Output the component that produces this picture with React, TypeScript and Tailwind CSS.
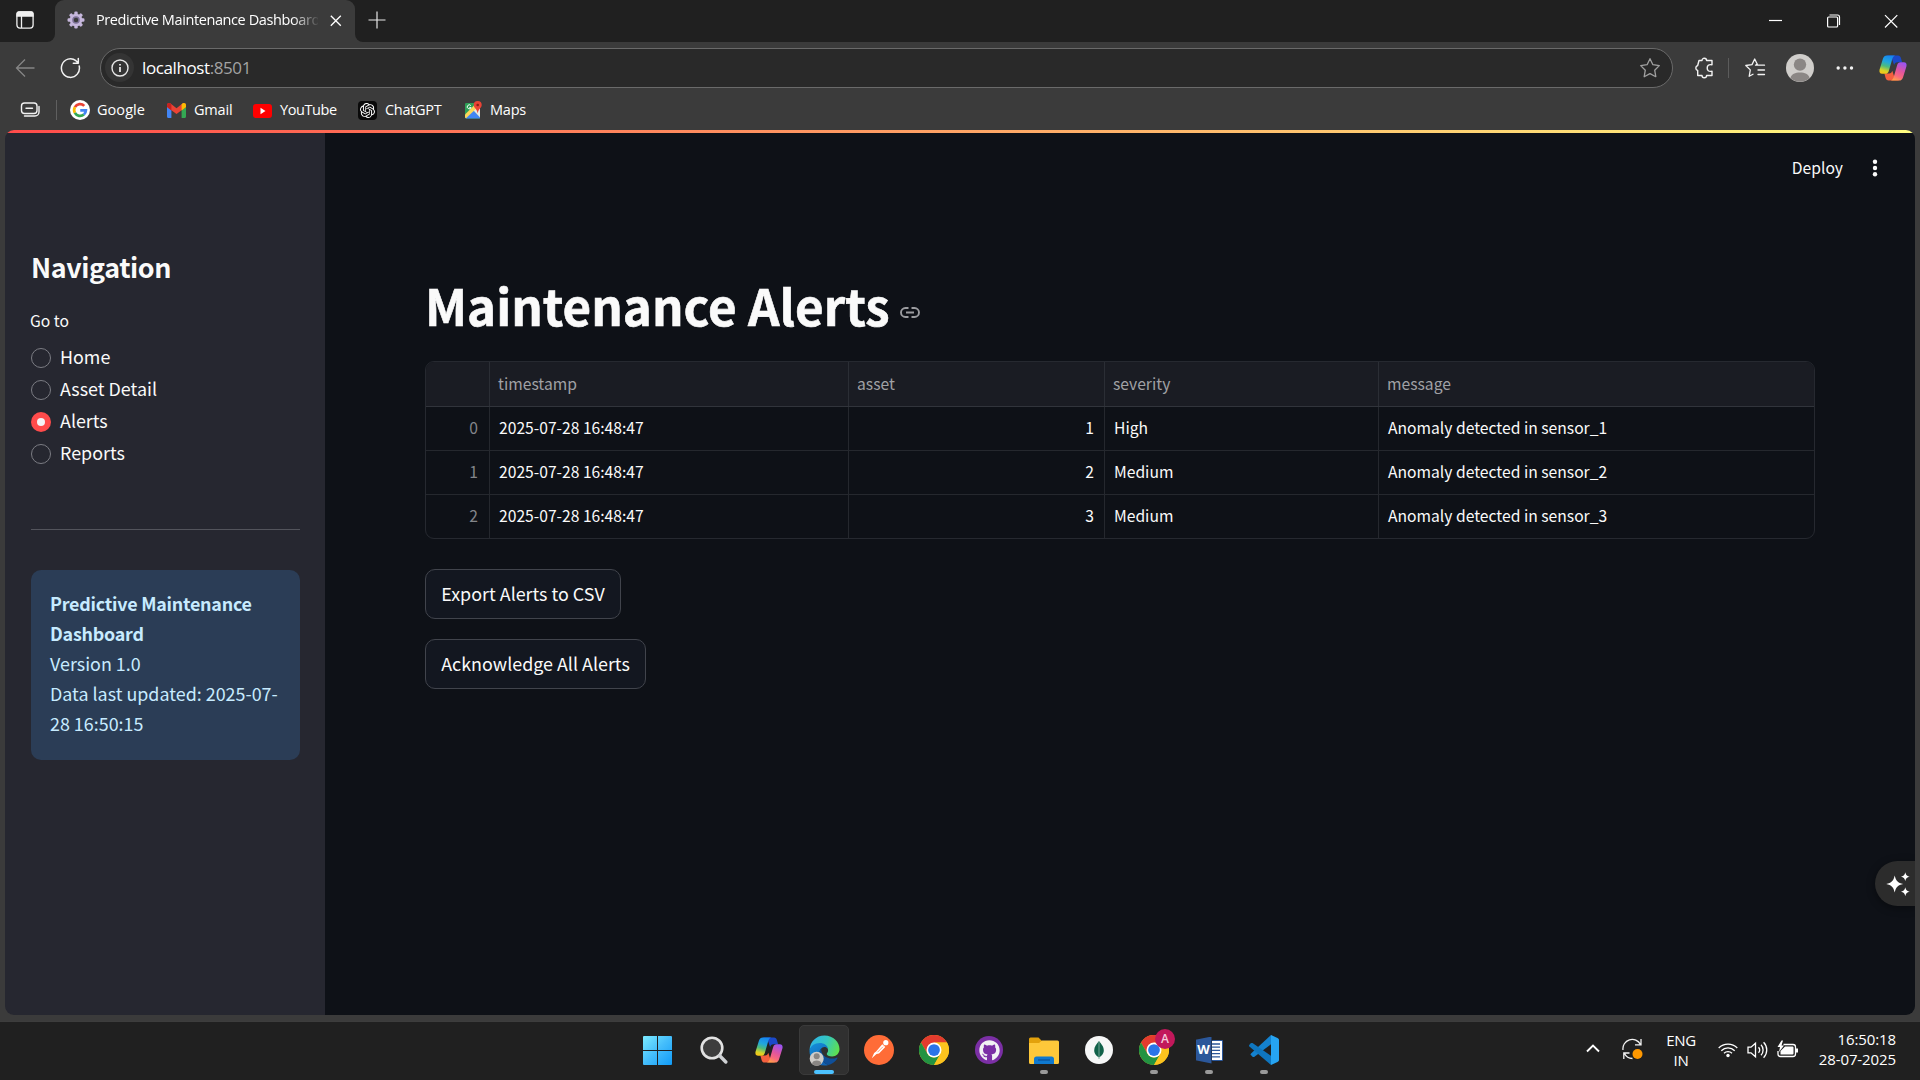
import React from "react";
import { FaGithub } from "react-icons/fa";
import { SiOpenai } from "react-icons/si";

const UI = "font-['Open_Sans','Noto_Sans',sans-serif]";

function Copilot({ size, id }: { size: number; id: string }) {
  return (
    <svg width={size} height={size} viewBox="0 0 28 28">
      <defs>
        <linearGradient id={id + "a"} x1="0.6" y1="0" x2="0.35" y2="1">
          <stop offset="0" stopColor="#1686f0" />
          <stop offset="0.35" stopColor="#21a6dd" />
          <stop offset="0.6" stopColor="#4dbb7d" />
          <stop offset="0.85" stopColor="#d8d327" />
          <stop offset="1" stopColor="#f5c518" />
        </linearGradient>
        <linearGradient id={id + "b"} x1="0.7" y1="0" x2="0.3" y2="1">
          <stop offset="0" stopColor="#9a54f2" />
          <stop offset="0.45" stopColor="#e0559f" />
          <stop offset="0.75" stopColor="#f9687c" />
          <stop offset="1" stopColor="#ffa04c" />
        </linearGradient>
      </defs>
      <path d="M8 1.5h11c1.6 0 2.4 1 2.9 2.5l1.2 4.2h-4.6c-2 0-2.9 1.2-3.4 2.8L13 5z" fill="#1b49c9" />
      <path d="M20 26.5H9.6c-1.7 0-2.5-1-3-2.5L5.4 19.6H10c2 0 2.8-1.2 3.3-2.8L15 22z" fill="#f4603e" />
      <path d="M7.8 1.5h8.4c-1.8.6-2.5 2-3 3.8L9.8 17c-.6 1.9-1.6 2.8-3.4 2.8H3.2C.8 19.800 0 18 .6 15.600L4 4.600C4.700 2.500 5.900 1.500 7.800 1.500z" fill={`url(#${id}a)`} />
      <path d="M20.200 26.500h-8.400c1.800-.6 2.500-2 3-3.800L18.200 11c.6-1.900 1.600-2.800 3.400-2.800h3.200c2.400 0 3.200 1.800 2.600 4.200L24 23.400c-.7 2.100-1.900 3.100-3.800 3.100z" fill={`url(#${id}b)`} />
    </svg>
  );
}

function Chrome() {
  return (
    <svg width="30" height="30" viewBox="0 0 48 48">
      <circle cx="24" cy="24" r="24" fill="#fbc116" />
      <path d="M24 12h20.800A24 24 0 0 0 3.200 12L13.600 30z" fill="#e33b2e" />
      <path d="M3.200 12A24 24 0 0 0 24 48l10.400-18A12 12 0 0 1 13.600 30z" fill="#229342" />
      <path d="M44.800 12A24 24 0 0 1 24 48l10.400-18A12 12 0 0 0 24 12z" fill="#fcc31e" />
      <circle cx="24" cy="24" r="12" fill="#fff" />
      <circle cx="24" cy="24" r="9.400" fill="#2a74e8" />
    </svg>
  );
}

function Edge() {
  return (
    <svg width="31" height="31" viewBox="0 0 31 31">
      <defs>
        <linearGradient id="eg1" x1="0" y1="0.3" x2="1" y2="0.6">
          <stop offset="0" stopColor="#2fb4e8" />
          <stop offset="0.5" stopColor="#34c6c0" />
          <stop offset="1" stopColor="#5fe04e" />
        </linearGradient>
        <linearGradient id="eg2" x1="0" y1="0" x2="0.5" y2="1">
          <stop offset="0" stopColor="#1591dc" />
          <stop offset="1" stopColor="#0f62b4" />
        </linearGradient>
      </defs>
      <path d="M.6 15C.8 6.800 7.200.5 15.500.5 24.500.5 30.500 7 30.500 14c0 4.600-3.300 7.400-7.400 7.400-3 0-5.300-1-5.300-2.500 0-.8 1.300-1.400 1.300-3.600 0-2.800-3-5.300-7-5.300C6.500 10 2 12 .6 15z" fill="url(#eg1)" />
      <path d="M.5 15.700C1 11 5.600 8 11 8c3.600 0 7.500 2.200 7.900 5.500-1-1-2.300-1.500-3.500-1.500-2.800 0-5 3-5 6.600 0 5.400 4.500 9.900 9 11.300-1.200.4-2.500.6-3.900.6C7 30.500.3 23.700.5 15.700z" fill="url(#eg2)" />
      <path d="M12.300 13.500c-1.200 1.300-1.900 3-1.900 5.100 0 5.500 4.300 9.900 9.200 11.300 3.600-1 6.800-3.400 8.700-6.500.4-.6-.1-1-.7-.7-1.300.6-2.700.9-4.500.9-6.300 0-11.500-4.400-10.800-10.100z" fill="#0f4f99" />
      <circle cx="7.700" cy="23.700" r="7" fill="#cfccc8" />
      <circle cx="7.700" cy="21.300" r="3" fill="#8a8683" />
      <path d="M3 28.900c.3-2.400 2.200-3.400 4.700-3.400s4.400 1 4.700 3.400a7 7 0 0 1-9.400 0z" fill="#8a8683" />
    </svg>
  );
}

function Star({ lines, color }: { lines?: boolean; color: string }) {
  return (
    <svg width="22" height="22" viewBox="0 0 22 22" fill="none" stroke={color} strokeWidth="1.3" strokeLinejoin="round" strokeLinecap="round">
      {lines ? (
        <path d="M12.500 7.300H13.300L10.700 2 8 7.600 1.800 8.500l4.500 4.400-1.100 6.400L9 17.200M11.500 8.200h9M14 13h6.500M14 17.500h6.500" />
      ) : (
        <path d="m11 1.700 2.900 6 6.400.9-4.600 4.600 1.100 6.500-5.800-3.100-5.800 3.100 1.100-6.500L1.700 8.600l6.400-.9z" />
      )}
    </svg>
  );
}

function TitleBar() {
  return (
    <div className="flex h-[43px] w-full bg-[#3b3b3b]">
      <div className="flex h-[42px] w-[55px] items-start rounded-br-[8px] bg-[#202020] pt-[11px] pl-[16px]">
        <svg width="18" height="18" viewBox="0 0 18 18" fill="none" stroke="#f0f0f0" strokeWidth="1.3">
          <rect x="0.900" y="0.900" width="16.200" height="16.200" rx="3" />
          <path d="M1 2.500a1.500 1.500 0 0 1 1.500-1.500h13A1.500 1.500 0 0 1 17 2.500V5H1z" fill="#f0f0f0" />
          <path d="M5.500 5v12" />
        </svg>
      </div>
      <div className="w-[300px] bg-[#202020]">
        <div className="flex h-[43px] items-center rounded-t-[9px] bg-[#3b3b3b] pb-[4px] pl-[12px]">
          <svg width="18" height="18" viewBox="0 0 20 20" className="shrink-0">
            <g fill="#c6b7dc">
              {[0, 45, 90, 135].map((a) => (
                <rect key={a} x="8.100" y="0.600" width="3.800" height="18.800" rx="1.300" transform={`rotate(${a} 10 10)`} />
              ))}
              <circle cx="10" cy="10" r="7" />
            </g>
            <circle cx="10" cy="10" r="4.200" fill="#7d7196" />
            <circle cx="10" cy="10" r="2.500" fill="#3b3b3b" />
          </svg>
          <div className={`${UI} ml-[11px] w-[222px] shrink-0 overflow-hidden text-[14.5px] leading-[20px] tracking-[-0.4px] whitespace-nowrap text-white [mask-image:linear-gradient(to_right,black_196px,transparent_224px)]`}>
            Predictive Maintenance Dashboard
          </div>
          <svg width="12" height="12" viewBox="0 0 12 12" className="mt-[3px] ml-[12px] shrink-0" stroke="#fff" strokeWidth="1.300">
            <path d="m.8.8 10 10M10.800.8l-10 10" />
          </svg>
        </div>
      </div>
      <div className="flex h-[42px] flex-1 rounded-bl-[8px] bg-[#202020]">
        <svg width="18" height="18" viewBox="0 0 18 18" className="mt-[11px] ml-[13px]" stroke="#e8e8e8" strokeWidth="1.2">
          <path d="M9 .5v17M.5 9h17" />
        </svg>
        <div className="flex-1" />
        <svg width="130" height="14" viewBox="0 0 130 14" className="mt-[14px] mr-[22px]" fill="none" stroke="#fff" strokeWidth="1.200">
          <path d="M1 6.500h13" />
          <rect x="59.600" y="3" width="10" height="10" rx="1" />
          <path d="M61.500 1h8a2 2 0 0 1 2 2v8" />
          <path d="m117 1.200 12.300 12.300M129.300 1.200 117 13.500" />
        </svg>
      </div>
    </div>
  );
}

function Toolbar() {
  return (
    <div className="flex h-[49px] items-center">
      <svg width="21" height="20" viewBox="0 0 20 20" className="ml-[15px]" fill="none" stroke="#858585" strokeWidth="1.300">
        <path d="M19 10H1M9.500 1.500 1 10l8.500 8.500" />
      </svg>
      <svg width="21" height="22" viewBox="0 0 21 22" className="ml-[24px]" fill="none" stroke="#f2f2f2" strokeWidth="1.500" strokeLinecap="round" strokeLinejoin="round">
        <path d="M19.200 9a9 9.300 0 1 1-3.300-5.300L18 5.700M18.300 1.500v4.700h-5" />
      </svg>
      <div className="ml-[19px] flex h-[40px] w-[1573px] items-center rounded-full border border-[#6a6a6a] bg-[#292929] pr-[11px] pl-[4px]">
        <div className="flex size-[29px] items-center justify-center rounded-full bg-[#343434]">
          <svg width="18" height="18" viewBox="0 0 18 18" fill="none" stroke="#e6e6e6" strokeWidth="1.400">
            <circle cx="9" cy="9" r="8" />
            <path d="M9 8v5M9 5v1.600" strokeWidth="1.800" />
          </svg>
        </div>
        <div className={`${UI} ml-[8px] text-[17px] leading-[24px] tracking-[-0.4px] text-white`}>
          localhost<span className="text-[#a3a3a3]">:8501</span>
        </div>
        <div className="flex-1" />
        <Star color="#a0a0a0" />
      </div>
      <svg width="20" height="22" viewBox="0 0 20 22" className="ml-[21px]" fill="none" stroke="#f2f2f2" strokeWidth="1.400" strokeLinejoin="round">
        <path d="M5 3.500h3a2.300 2.300 0 0 1 4.600 0H18v4.300c-3.500-.8-4.800 1-4.800 3.200s1.300 4 4.800 3.200v4.300h-5.400a2.300 2.300 0 0 1-4.600 0H3.700v-5a2.600 2.600 0 0 1 0-5z" />
      </svg>
      <div className="ml-[14px] h-[20px] w-px bg-[#5c5c5c]" />
      <div className="ml-[15px]"><Star lines color="#f2f2f2" /></div>
      <svg width="28" height="28" viewBox="0 0 28 28" className="ml-[20px]">
        <circle cx="14" cy="14" r="14" fill="#d0cecb" />
        <circle cx="14" cy="10.600" r="6.200" fill="#8b8785" />
        <path d="M4.500 24c.8-4 4.800-5.500 9.500-5.500s8.700 1.500 9.500 5.500a14 14 0 0 1-19 0z" fill="#8b8785" />
      </svg>
      <svg width="18" height="4" viewBox="0 0 18 4" className="ml-[22px]" fill="#f2f2f2">
        <circle cx="2.200" cy="2" r="1.700" /><circle cx="8.900" cy="2" r="1.700" /><circle cx="15.500" cy="2" r="1.700" />
      </svg>
      <div className="ml-[25px]"><Copilot size={28} id="ct" /></div>
    </div>
  );
}

function Bookmark({ icon, label, className }: { icon: React.ReactNode; label: string; className: string }) {
  return (
    <div className={`flex items-center ${className}`}>
      {icon}
      <span className={`${UI} ml-[8px] pb-px text-[14.5px] leading-[20px] whitespace-nowrap text-white`}>{label}</span>
    </div>
  );
}

function BookmarkBar() {
  return (
    <div className="flex h-[36px] items-center">
      <svg width="20" height="16" viewBox="0 0 20 16" className="ml-[20px]" fill="none" stroke="#f2f2f2" strokeWidth="1.400" strokeLinecap="round">
        <rect x="1.500" y="1" width="15.500" height="10.500" rx="3" />
        <path d="M6 6.300h6.500M19 4.500V10a4 4 0 0 1-4 4H4.500" />
      </svg>
      <div className="ml-[16px] h-[20px] w-px bg-[#5f5f5f]" />
      <Bookmark
        className="ml-[13px] w-[97px] tracking-[0.05px]"
        label="Google"
        icon={
          <svg width="20" height="20" viewBox="0 0 40 40" className="-mr-[1px]">
            <circle cx="20" cy="20" r="20" fill="#fff" />
            <g fill="none" strokeWidth="5.500">
              <path d="M9.800 14.300A11.800 11.800 0 0 1 28.500 11.800" stroke="#ea4335" />
              <path d="M9.800 14.300a11.800 11.800 0 0 0 0 11.400" stroke="#fbbc05" />
              <path d="M9.800 25.700a11.800 11.800 0 0 0 18 3.300" stroke="#34a853" />
              <path d="M27.800 29a11.800 11.800 0 0 0 4-8.500H20.500" stroke="#4285f4" />
            </g>
          </svg>
        }
      />
      <Bookmark
        className="w-[86px] tracking-[-0.2px]"
        label="Gmail"
        icon={
          <svg width="19" height="15" viewBox="0 0 19 15">
            <path d="M0 3v10.500C0 14.300.6 15 1.400 15h3V6z" fill="#4285f4" />
            <path d="M19 3v10.500c0 .8-.6 1.500-1.400 1.500h-3V6z" fill="#34a853" />
            <path d="M0 4V2.200C0 .3 2 -.6 3.500.5l6 4.700 6-4.700C17 -.6 19 .3 19 2.200V4L9.500 11z" fill="#ea4335" />
            <path d="M14.600 1.200 15.500.5C17 -.6 19 .3 19 2.200V4l-4.400 3.500z" fill="#fbbc04" />
            <path d="M4.400 1.200 3.500.5C2 -.6 0 .3 0 2.200V4l4.400 3.500z" fill="#c5221f" />
          </svg>
        }
      />
      <Bookmark
        className="w-[105px] tracking-[-0.4px]"
        label="YouTube"
        icon={
          <svg width="19" height="14" viewBox="0 0 19 14" className="mt-px">
            <rect width="19" height="14" rx="3" fill="#f00" />
            <path d="M7.500 3.800v6.400L12.500 7z" fill="#fff" />
          </svg>
        }
      />
      <Bookmark
        className="w-[107px] tracking-[-0.3px]"
        label="ChatGPT"
        icon={
          <div className="flex size-[19px] items-center justify-center rounded-[4px] bg-[#0a0a0a]">
            <SiOpenai size={15} color="#fff" />
          </div>
        }
      />
      <Bookmark
        className="tracking-[-0.2px]"
        label="Maps"
        icon={
          <svg width="17" height="18" viewBox="0 0 17 18">
            <rect y="2" width="15" height="15.500" rx="1.500" fill="#2d9f56" />
            <path d="M0 16 8 9l7 7v1.500H1z" fill="#4285f4" />
            <path d="M7.500 8.500 13 5l2 2v9.500z" fill="#e8e8e8" />
            <path d="m0 13.500 10-10L13 6 1 17.300A1.500 1.500 0 0 1 0 16z" fill="#fdd75a" />
            <path d="M0 3.500A1.500 1.500 0 0 1 1.500 2H10L0 12z" fill="#2d9f56" />
            <path d="M5.800 4.600a2 2 0 1 0 .3 2H4.300" stroke="#fff" strokeWidth="1" fill="none" />
            <path d="M12.700 0a4 4 0 0 1 4 4c0 3-3.300 3.800-4 8.500-.7-4.700-4-5.500-4-8.500a4 4 0 0 1 4-4z" fill="#ea4335" />
            <circle cx="12.700" cy="4" r="1.300" fill="#8c1d14" />
          </svg>
        }
      />
    </div>
  );
}

const SANS = "font-['Noto_Sans_CJK_SC','Noto_Sans',sans-serif]";

function Sidebar() {
  return (
    <div className="flex w-[320px] flex-col bg-[#262730] px-[26px] pr-[25px] pt-[116px]">
      <h2 className="text-[26.9px] leading-[36px] font-semibold tracking-[-0.4px] text-[#fafafa]">Navigation</h2>
      <div className="-ml-px mt-[25px] text-[15.67px] leading-[22px] text-[#fafafa]">Go to</div>
      <div className="mt-[10px] flex flex-col">
        {["Home", "Asset Detail", "Alerts", "Reports"].map((n) => (
          <div key={n} className="flex h-[32px] items-center gap-[9px]">
            {n === "Alerts" ? (
              <div className="flex size-[20px] items-center justify-center rounded-full bg-[#ff4b4b]">
                <div className="size-[8px] rounded-full bg-[#f4f4f6]" />
              </div>
            ) : (
              <div className="size-[20px] rounded-full border border-[#7b7c83]" />
            )}
            <div className="pb-[4px] text-[17.9px] leading-[28px] text-[#fafafa]">{n}</div>
          </div>
        ))}
      </div>
      <div className="mt-[59px] h-px bg-[#53545c]" />
      <div className="mt-[40px] h-[190px] rounded-[10px] bg-[#2b3d56] pt-[18px] pl-[19px] text-[17.9px] leading-[30px] text-[#c7ebff]">
        <b className="font-semibold tracking-[-0.23px]">
          Predictive Maintenance
          <br />
          Dashboard
        </b>
        <br />
        Version 1.0
        <br />
        Data last updated: 2025-07-
        <br />
        28 16:50:15
      </div>
    </div>
  );
}

const rows = [
  ["0", "1", "High"],
  ["1", "2", "Medium"],
  ["2", "3", "Medium"],
];

function AlertsTable() {
  const grid = "grid grid-cols-[64px_359px_256px_274px_1fr]";
  return (
    <div className="h-[178px] w-[1390px] overflow-hidden rounded-[9px] border border-[#262930] text-[15.67px]">
      <div className={`${grid} h-[45px] border-b border-[#31343b] bg-[#1a1c23] leading-[44px] text-[#a0a1a5] [&>div]:pl-[8px] [&>div:not(:last-child)]:border-r [&>div:not(:last-child)]:border-[#2b2e35]`}>
        <div /><div>timestamp</div><div>asset</div><div>severity</div><div>message</div>
      </div>
      {rows.map((r, i) => (
        <div key={i} className={`${grid} ${i < 2 ? "border-b" : ""} h-[44px] border-[#25282e] leading-[42px] text-[#fafafa] [&>div:not(:last-child)]:border-r [&>div:not(:last-child)]:border-[#25282e]`}>
          <div className="pr-[11px] text-right text-[#83858a]">{r[0]}</div>
          <div className="pl-[9px]">2025-07-28 16:48:47</div>
          <div className="pr-[10px] text-right">{r[1]}</div>
          <div className="pl-[9px]">{r[2]}</div>
          <div className="pl-[9px]">Anomaly detected in sensor_{i + 1}</div>
        </div>
      ))}
    </div>
  );
}

function Main() {
  return (
    <div className="relative flex flex-1 flex-col bg-[#0e1117]">
      <div className="flex h-[69px] items-center justify-end pr-[37px]">
        <div className="text-[15.67px] leading-[24px] text-[#fafafa]">Deploy</div>
        <svg width="6" height="18" viewBox="0 0 6 18" className="ml-[29px]" fill="#fafafa">
          <circle cx="3" cy="2.700" r="2.200" /><circle cx="3" cy="9" r="2.200" /><circle cx="3" cy="15.300" r="2.200" />
        </svg>
      </div>
      <div className="flex flex-col items-start pt-[70px] pl-[100px]">
        <div className="flex h-[66px] items-center">
          <h1 className="text-[49.3px] leading-[66px] font-bold whitespace-nowrap text-[#fafafa] [-webkit-text-stroke:0.6px_#fafafa]">Maintenance Alerts</h1>
          <svg width="20" height="11" viewBox="0 0 20 11" className="mt-[14px] ml-[10px]" fill="none" stroke="#9b9ca0" strokeWidth="1.900">
            <path d="M8.500 1H5.500a4.500 4.500 0 0 0 0 9h3M11.500 1h3a4.500 4.500 0 0 1 0 9h-3M6 5.500h8" />
          </svg>
        </div>
        <div className="mt-[23px]"><AlertsTable /></div>
        {["Export Alerts to CSV", "Acknowledge All Alerts"].map((t, i) => (
          <button key={t} className={`${i === 0 ? "mt-[30px] w-[196px]" : "mt-[20px] w-[221px]"} h-[50px] rounded-[10px] border border-[#41444c] bg-[#131720] pb-[3px] text-[17.9px] leading-[30px] whitespace-nowrap text-[#fafafa]`}>
            {t}
          </button>
        ))}
      </div>
      <div className="absolute top-[728px] right-0 flex h-[45px] w-[40px] items-center rounded-l-full bg-[#2c2c2c] pl-[11px] shadow-[0_2px_8px_rgba(0,0,0,0.4)]">
        <svg width="24" height="24" viewBox="0 0 24 24" fill="#fff">
          <path d="M8.700 3.500c1.200 5.400 3.100 7.300 8.500 8.500-5.400 1.200-7.300 3.100-8.500 8.500-1.200-5.400-3.100-7.300-8.500-8.500 5.400-1.200 7.300-3.100 8.500-8.500zM19.300.3c.7 2.900 1.500 3.700 4.400 4.400-2.900.7-3.700 1.500-4.400 4.400-.7-2.900-1.500-3.700-4.400-4.400 2.900-.7 3.700-1.500 4.400-4.400zM19.300 15.300c.7 2.900 1.500 3.700 4.400 4.400-2.900.7-3.700 1.500-4.400 4.400-.7-2.900-1.500-3.700-4.400-4.400 2.900-.7 3.700-1.500 4.400-4.400z" />
        </svg>
      </div>
    </div>
  );
}

function Slot({ children, state }: { children: React.ReactNode; state?: "active" | "open" }) {
  return (
    <div className={`relative flex size-[50px] items-center justify-center rounded-[5px] ${state === "active" ? "border border-[#3a3a3a] bg-[#303030]" : ""}`}>
      {children}
      {state === "active" && <div className="absolute bottom-0 h-[4px] w-[20px] rounded-full bg-[#4cc2ff]" />}
      {state === "open" && <div className="absolute bottom-[1px] h-[4px] w-[8px] rounded-full bg-[#9a9a9a]" />}
    </div>
  );
}

function Taskbar() {
  return (
    <div className="flex h-[59px] items-start border-t border-[#3d3d3d] bg-[#202020] pt-[3px]">
      <div className="flex gap-[5px] pl-[634px]">
        <Slot>
          <svg width="29" height="29" viewBox="0 0 29 29" className="-ml-[3px] mt-px">
            <defs>
              <linearGradient id="win" x1="0" y1="0" x2="29" y2="29" gradientUnits="userSpaceOnUse">
                <stop offset="0" stopColor="#7cebff" /><stop offset="0.5" stopColor="#44bdfb" /><stop offset="1" stopColor="#119bf7" />
              </linearGradient>
            </defs>
            <path d="M1 0h13v14H0V1a1 1 0 0 1 1-1zM15 0h13a1 1 0 0 1 1 1v13H15zM0 15h14v14H1a1 1 0 0 1-1-1zM15 15h14v13a1 1 0 0 1-1 1H15z" fill="url(#win)" />
          </svg>
        </Slot>
        <Slot>
          <svg width="28" height="28" viewBox="0 0 28 28">
            <circle cx="12" cy="12" r="10.300" fill="#3d3d3d" stroke="#e2e2e2" strokeWidth="2.600" />
            <path d="m19.500 19.500 6.300 6.500" stroke="#cfd1d4" strokeWidth="3.400" strokeLinecap="round" />
          </svg>
        </Slot>
        <Slot><Copilot size={28} id="cb" /></Slot>
        <Slot state="active"><Edge /></Slot>
        <Slot>
          <svg width="30" height="30" viewBox="0 0 30 30">
            <circle cx="15" cy="15" r="15" fill="#ff6c37" />
            <circle cx="21.800" cy="7.700" r="2.600" fill="#fff" />
            <path d="m18.300 9.300 3 2.800-6.300 6.300-2.500.6-4.700 4.300 2.300-5.300 2-1.500z" fill="#fff" />
            <path d="m13.500 17.200 5.500-5.500" stroke="#ff6c37" strokeWidth="0.700" />
          </svg>
        </Slot>
        <Slot><Chrome /></Slot>
        <Slot>
          <div className="flex size-[28px] items-center justify-center rounded-full bg-[#7b2fa5]">
            <FaGithub size={21} color="#f2f2f4" />
          </div>
        </Slot>
        <Slot state="open">
          <svg width="30" height="27" viewBox="0 0 30 27">
            <path d="M0 2A1.500 1.500 0 0 1 1.500.5h8L13 4v5H0z" fill="#e2a10c" />
            <path d="M0 6h10l3-2.500h15.500A1.500 1.500 0 0 1 30 5v20.500a1.500 1.500 0 0 1-1.500 1.500h-27A1.500 1.500 0 0 1 0 25.500z" fill="#fdc83a" />
            <path d="M5 27v-5a2.500 2.500 0 0 1 2.500-2.500h15A2.500 2.500 0 0 1 25 22v5z" fill="#0f79cf" />
            <path d="M9 23h12" stroke="#0b4f95" strokeWidth="1.200" />
          </svg>
        </Slot>
        <Slot>
          <svg width="28" height="28" viewBox="0 0 28 28">
            <circle cx="14" cy="14" r="14" fill="#f6f7f7" />
            <path d="M14 5c2.500 3.300 4.800 5.500 4.800 9.500 0 3.500-2.500 5.500-4.500 6.700h-.6c-2-1.200-4.500-3.200-4.500-6.700C9.200 10.500 11.500 8.300 14 5z" fill="#116149" />
            <path d="M14 6v17" stroke="#7ba99a" strokeWidth="0.900" />
          </svg>
        </Slot>
        <Slot state="open">
          <Chrome />
          <div className={`${UI} absolute top-[4px] left-[26px] flex size-[20px] items-center justify-center rounded-full bg-[#c2185b] text-[12px] leading-none font-semibold text-[#f4c9da]`}>A</div>
        </Slot>
        <Slot state="open">
          <div className="flex items-center">
            <div className={`${UI} flex h-[27px] w-[16px] items-center justify-center bg-[#2b579a] text-[13px] font-bold text-white [clip-path:polygon(0_12%,100%_0,100%_100%,0_88%)]`}>W</div>
            <svg width="11" height="21" viewBox="0 0 11 21">
              <rect width="11" height="21" rx="1" fill="#2b579a" />
              <rect width="10" height="19" y="1" fill="#fff" />
              <path d="M0 4h8M0 7.200h8M0 10.400h8M0 13.600h8M0 16.800h8" stroke="#2b579a" strokeWidth="1.300" />
            </svg>
          </div>
        </Slot>
        <Slot state="open">
          <svg width="30" height="30" viewBox="0 0 30 30">
            <path d="M22 0 2 18.600c-.6.600-.6 1.100 0 1.700l1.600 1.500c.5.400 1 .4 1.500.1L25 7z" fill="#1482cf" />
            <path d="M22 30 .4 11.400c-.5-.6-.5-1.200 0-1.700L2 8.200c.5-.4 1-.4 1.500-.1L25 23z" fill="#0f76bf" />
            <path d="m22 0 6.500 3c1 .5 1.500 1.200 1.500 2.300v19.400c0 1-.5 1.800-1.500 2.300L22 30z" fill="#26a4f2" />
          </svg>
        </Slot>
      </div>
      <div className={`${UI} flex flex-1 items-center pt-[2px] text-[15px] leading-[20px] text-white`}>
        <svg width="14" height="9" viewBox="0 0 14 9" className="ml-[297px]" fill="none" stroke="#fff" strokeWidth="1.900">
          <path d="m1 7.500 6-6 6 6" />
        </svg>
        <svg width="21" height="22" viewBox="0 0 21 22" className="ml-[22px]" fill="none" stroke="#f2f2f2" strokeWidth="1.300">
          <path d="M1 12A9.300 9.300 0 0 1 18.500 6.500M19 1v5.800h-6M10.500 20.500c-3.500 0-6.500-1.800-8-5M1.800 21v-6H7.500" />
          <circle cx="15.500" cy="16" r="5" fill="#ff9800" stroke="none" />
        </svg>
        <div className="ml-[16px] w-[44px] pt-[3px] text-center tracking-[-0.3px]">ENG<br />IN</div>
        <svg width="20" height="16" viewBox="0 0 20 16" className="mt-[2px] mr-[9px] ml-[15px]" fill="none" stroke="#fff" strokeWidth="1.300">
          <path d="M.7 6a13 13 0 0 1 18.600 0M3.300 8.700a9.300 9.300 0 0 1 13.400 0M6 11.200a5.700 5.700 0 0 1 8 0" />
          <circle cx="10" cy="13.500" r="1.700" fill="#fff" stroke="none" />
        </svg>
        <svg width="21" height="18" viewBox="0 0 21 18" className="mt-[2px]" fill="none" stroke="#fff" strokeWidth="1.300">
          <path d="M1 6.200h3l4.500-4v13.600L4 11.800H1zM11.500 6.300a4 4 0 0 1 0 5.400M14 3.800a7.500 7.500 0 0 1 0 10.400M16.600 1.300a11 11 0 0 1 0 15.400" />
        </svg>
        <svg width="21" height="18" viewBox="0 0 21 18" className="ml-[9px]" fill="#fff">
          <path d="M6.500 4.500H16a2.500 2.500 0 0 1 2.500 2.500v7a2.500 2.500 0 0 1-2.500 2.500H3.500A2.500 2.500 0 0 1 1 14v-3" fill="none" stroke="#fff" strokeWidth="1.300" />
          <path d="M8 6.500h7.500a1 1 0 0 1 1 1v6a1 1 0 0 1-1 1h-12V11zM19 8.500h2v4h-2zM4.500.5.500 7H3l-1 5 5-6.500H4.500L6 .5z" />
        </svg>
        <div className="ml-[18px] w-[80px] pt-[1px] text-right tracking-[-0.1px] whitespace-nowrap">16:50:18<br />28-07-2025</div>
      </div>
    </div>
  );
}

export default function App() {
  return (
    <div className="flex h-[1080px] w-[1920px] flex-col overflow-hidden bg-[#3b3b3b]">
      <TitleBar />
      <Toolbar />
      <BookmarkBar />
      <div className={`${SANS} mx-[5px] mt-[2px] mb-[6px] flex h-[885px] flex-col overflow-hidden rounded-[9px]`}>
        <div className="h-[3px] shrink-0 bg-[linear-gradient(90deg,#ff4b4b,#fffd80)]" />
        <div className="flex flex-1">
          <Sidebar />
          <Main />
        </div>
      </div>
      <Taskbar />
    </div>
  );
}
